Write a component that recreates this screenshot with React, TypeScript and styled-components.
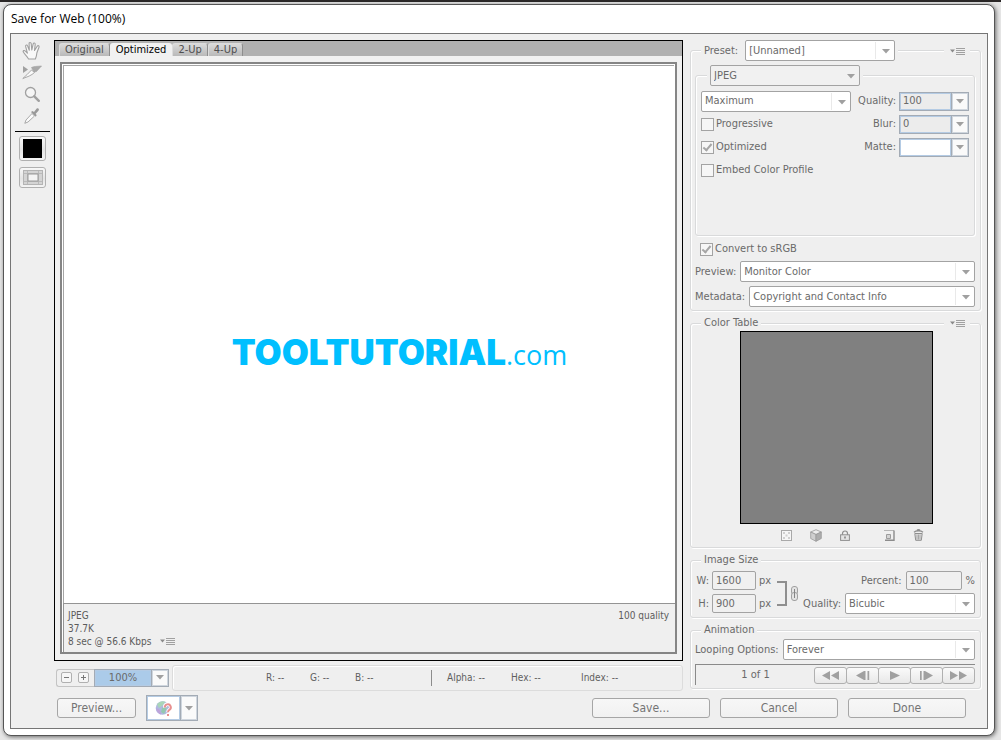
import React, { useState } from "react";
import styled, { createGlobalStyle } from "styled-components";

const UI_FONT = `"DejaVu Sans Condensed", "DejaVu Sans", sans-serif`;
const PANEL = "#efefef";
const TEXT = "#6a6a6a";
const EDGE = "#a3a3a3";
const MUTED = "#a0a0a0";
const BLUE_EDGE = "#a3abb5";
const BLUE_GLOW = "#b4cbe4";

const GlobalStyle = createGlobalStyle`
  *, *::before, *::after { box-sizing: border-box; }
  body { margin: 0; background: #e3e3e3; }
  button, input, select { font: inherit; color: inherit; margin: 0; }
`;

const Desktop = styled.div`
  display: flex;
  flex-direction: column;
  min-height: 100vh;
  padding: 2px 6px 4px 3px;
  border-top: 2px solid #2b2828;
  background: #e6e6e6;
  font: 11px/14px ${UI_FONT};
  color: ${TEXT};
`;

const Dialog = styled.main`
  flex: 1;
  display: flex;
  flex-direction: column;
  padding: 0 6px 6px;
  border: 1px solid #555;
  border-radius: 8px;
  background: #fff;
  box-shadow: 1px 1px 4px rgba(0, 0, 0, 0.55);
`;

const TitleBar = styled.h1`
  margin: 0;
  height: 28px;
  padding-left: 1px;
  font: 12px/28px "Open Sans", "Noto Sans", sans-serif;
  color: #000;
`;

const Body = styled.div`
  flex: 1;
  display: flex;
  flex-direction: column;
  border: 1px solid #757575;
  background: ${PANEL};
`;

const Columns = styled.div`
  flex: 1;
  display: grid;
  grid-template-columns: 43px minmax(0, 1fr) 291px;
  padding: 6px 6px 0 0;
`;

/* Tool strip */

const Tools = styled.nav`
  display: flex;
  flex-direction: column;
  align-items: center;
`;

const ToolButton = styled.button`
  display: grid;
  place-items: center;
  width: 24px;
  height: 22px;
  padding: 0 2px 2px 0;
  border: 0;
  background: none;
`;

const ToolRule = styled.hr`
  width: 35px;
  margin: 3px 0 4px;
  border: 0;
  border-top: 1px solid #000;
`;

const WellButton = styled.button<{ $tall?: boolean }>`
  display: grid;
  place-items: center;
  width: 27px;
  height: ${(p) => (p.$tall ? 25 : 21)}px;
  margin-bottom: 6px;
  padding: 0;
  border: 1px solid #b0b0b0;
  border-radius: 3px;
  background: linear-gradient(#f8f8f8, #e4e4e4 55%, #f4f4f4);
`;

const Swatch = styled.span`
  width: 19px;
  height: 19px;
  background: #000;
`;

/* Document view */

const Center = styled.section`
  display: flex;
  flex-direction: column;
  min-width: 0;
  margin-right: 7px;
`;

const View = styled.div`
  flex: 1;
  display: flex;
  flex-direction: column;
  border: 1px solid #000;
  background: #f1f1f1;
`;

const TabBar = styled.div`
  display: flex;
  align-items: flex-end;
  height: 15px;
  padding-left: 4px;
  background: #b1b1b1;
`;

const Tab = styled.button<{ $active?: boolean }>`
  height: 13px;
  padding: 0 5px;
  border: 1px solid ${(p) => (p.$active ? "#f1f1f1" : "#dcdcdc")};
  border-right-color: ${(p) => (p.$active ? "#f1f1f1" : "#8e8e8e")};
  border-bottom: 0;
  border-radius: 3px 3px 0 0;
  background: ${(p) => (p.$active ? "#f1f1f1" : "linear-gradient(#dadada, #b9b9b9)")};
  color: ${(p) => (p.$active ? "#000" : "#4f4f4f")};
  line-height: 12px;
`;

const Frame = styled.div`
  flex: 1;
  display: flex;
  flex-direction: column;
  margin: 6px 5px;
  border: 2px solid #858585;
  padding-left: 1px;
  background: #fff;
`;

const Canvas = styled.div`
  flex: 1;
  display: flex;
  align-items: center;
  justify-content: center;
  padding: 38px 0 0 61px;
  margin: 1px 1px 0 0;
  border-left: 1px solid #a5a5a5;
  border-top: 1px solid #a5a5a5;
`;

const Logo = styled.p`
  display: flex;
  align-items: baseline;
  margin: 0;
  color: #00bfff;
  font: 27px/36px "Open Sans", "Noto Sans", sans-serif;
`;

const LogoMark = styled.strong`
  font: 900 35px/36px Inter, sans-serif;
`;

const Info = styled.div`
  display: flex;
  justify-content: space-between;
  align-items: flex-start;
  height: 49px;
  padding: 5px 6px 0 4px;
  border: 1px solid #949494;
  border-width: 1px 0 0 1px;
  background: ${PANEL};
  font-size: 10px;
  line-height: 13px;
  color: #5c5c5c;
`;

const InfoLine = styled.div`
  display: flex;
  align-items: center;
  gap: 9px;
`;

const StatusRow = styled.div`
  display: flex;
  align-items: center;
  gap: 3px;
  margin: 3px 0 0 2px;
  height: 27px;
`;

const ZoomBox = styled.div`
  display: flex;
  align-items: center;
  justify-content: space-between;
  width: 113px;
  height: 18px;
  border: 1px solid #c4c4c4;
  border-right: 0;
  border-radius: 3px 0 0 3px;
`;

const StepButton = styled.button`
  display: grid;
  place-items: center;
  width: 11px;
  height: 11px;
  margin: 0 2px 0 4px;
  padding: 0;
  border: 1px solid #b0b0b0;
  border-radius: 2px;
  background: #f6f6f6;
`;

const StatusPanel = styled.div`
  flex: 1;
  display: grid;
  grid-template-columns: 44px 45px 76px 16px 64px 70px 1fr;
  align-items: center;
  height: 26px;
  padding-left: 93px;
  border: 1px solid #dcdcdc;
  border-radius: 3px;
  box-shadow: inset 1px 1px 0 #fff;
  font-size: 10px;
  white-space: nowrap;
  color: #5f5f5f;
`;

const Tick = styled.span`
  width: 1px;
  height: 16px;
  background: #8c8c8c;
`;

/* Settings column */

const Settings = styled.form`
  display: flex;
  flex-direction: column;
  gap: 5px;
`;

const Group = styled.fieldset`
  position: relative;
  display: flex;
  flex-direction: column;
  min-width: 0;
  margin: 0;
  padding: 0 5px 3px 4px;
  border: 1px solid #d9dadb;
  border-radius: 3px;
  box-shadow: 1px 1px 0 #fff, inset 1px 1px 0 #fff;
`;

const FormatGroup = styled(Group)`
  margin-top: 4px;
  padding: 0 5px;
`;

const Legend = styled.legend`
  margin-left: 6px;
  padding: 0 3px;
  background: ${PANEL};
`;

const MenuButton = styled.button<{ $tall?: boolean }>`
  position: absolute;
  top: ${(p) => (p.$tall ? -18 : -15)}px;
  right: 10px;
  display: grid;
  place-items: center;
  width: 26px;
  height: 16px;
  padding: 0;
  border: 0;
  background: ${PANEL};
`;

const InlineMenu = styled.button`
  display: grid;
  padding: 0;
  border: 0;
  background: none;
`;

const Row = styled.div<{ $top?: number; $h?: number; $indent?: number }>`
  display: flex;
  align-items: center;
  justify-content: space-between;
  gap: 4px;
  height: ${(p) => p.$h ?? 21}px;
  margin-top: ${(p) => p.$top ?? 0}px;
  padding-left: ${(p) => p.$indent ?? 0}px;
`;

const Label = styled.label<{ $w?: number }>`
  ${(p) => p.$w && `width: ${p.$w}px; text-align: right;`}
  white-space: nowrap;
`;

const SelectShell = styled.span<{ $w?: number; $plain?: boolean }>`
  position: relative;
  display: flex;
  ${(p) => (p.$w ? `width: ${p.$w}px;` : "flex: 1;")}
  height: 21px;
  border: 1px solid ${EDGE};
  border-radius: 2px;
  background: ${(p) => (p.$plain ? "#f1f1f1" : "#fff")};

  &::after {
    content: "";
    position: absolute;
    top: 1px;
    bottom: 1px;
    right: 18px;
    width: 1px;
    background: ${(p) => (p.$plain ? "transparent" : "#e9e9e9")};
  }
`;

const NativeSelect = styled.select`
  appearance: none;
  width: 100%;
  padding: 0 20px 0 3px;
  border: 0;
  background: none;
  outline: none;
`;

const SelectArrow = styled.svg`
  position: absolute;
  top: 8px;
  right: 4px;
  pointer-events: none;
`;

const Combo = styled.span<{ $w: number; $h?: number }>`
  display: flex;
  flex-shrink: 0;
  width: ${(p) => p.$w}px;
  height: ${(p) => p.$h ?? 19}px;
  border: 1px solid ${BLUE_EDGE};
`;

const ComboInput = styled.input<{ $fill?: string; $center?: boolean }>`
  flex: 1;
  min-width: 0;
  padding: 0 3px;
  border: 0;
  border-radius: 0;
  background: ${(p) => p.$fill ?? "#ececec"};
  box-shadow: inset 0 0 0 1px ${BLUE_GLOW};
  text-align: ${(p) => (p.$center ? "center" : "left")};
  outline: none;
`;

const ComboButton = styled.button`
  display: grid;
  place-items: center;
  width: 17px;
  padding: 0;
  border: 0;
  border-left: 1px solid ${BLUE_EDGE};
  background: #fafafa;
  box-shadow: inset 0 0 0 1px #cfd6de;
`;

const Fields = styled.div`
  display: flex;
  flex-direction: column;
  gap: 3px;
  min-height: 144px;
  margin-top: 5px;
`;

const CheckLabel = styled.label`
  display: flex;
  align-items: center;
  gap: 2px;
`;

const Check = styled.input`
  appearance: none;
  display: grid;
  place-items: center;
  width: 13px;
  height: 13px;
  border: 1px solid ${EDGE};
  background: #f6f6f6;

  &:checked::before {
    content: "";
    width: 5px;
    height: 9px;
    margin-bottom: 2px;
    border: solid #a6a6a6;
    border-width: 0 2px 2px 0;
    transform: rotate(40deg);
  }
`;

const Pair = styled.span<{ $gap?: number }>`
  display: flex;
  align-items: center;
  gap: ${(p) => p.$gap ?? 3}px;
`;

const ColorTable = styled.div`
  align-self: center;
  width: 193px;
  height: 193px;
  margin: 1px 0 0 2px;
  border: 1px solid #000;
  background: #808080;
`;

const IconRow = styled.div`
  display: flex;
  justify-content: flex-end;
  gap: 16px;
  height: 18px;
  margin: 2px 50px 0 0;
`;

const IconButton = styled.button<{ $spaced?: boolean }>`
  display: grid;
  place-items: center;
  width: 13px;
  padding: 0;
  margin-left: ${(p) => (p.$spaced ? 16 : 0)}px;
  border: 0;
  background: none;
`;

const NumberInput = styled.input<{ $w: number }>`
  width: ${(p) => p.$w}px;
  height: 19px;
  padding: 0 3px;
  border: 1px solid ${EDGE};
  border-radius: 2px;
  background: #f0f0f0;
  outline: none;
`;

const SizeGrid = styled.div`
  display: grid;
  grid-template-columns: auto auto 1fr;
  margin-top: 4px;
`;

const SizeColumn = styled.div`
  display: flex;
  flex-direction: column;
  gap: 3px;
  align-items: flex-end;
`;

const LinkIcon = styled.svg`
  margin: 10px 0 0 5px;
`;

const Player = styled.div`
  display: flex;
  align-items: center;
  height: 21px;
  margin-top: 4px;
  border: 1px solid #8a8a8a;
  border-width: 1px 0 0 1px;
`;

const FrameCount = styled.output`
  flex: 1;
  text-align: center;
`;

const PlayerButton = styled.button`
  display: grid;
  place-items: center;
  width: 33px;
  height: 17px;
  margin-left: -1px;
  padding: 0;
  border: 1px solid #b0b0b0;
  border-radius: 3px;
  background: linear-gradient(#fafafa, #e8e8e8);
`;

/* Footer */

const Footer = styled.footer`
  display: flex;
  align-items: center;
  gap: 10px;
  height: 37px;
  padding: 0 21px 3px 46px;
`;

const PushButton = styled.button<{ $w: number }>`
  width: ${(p) => p.$w}px;
  height: 20px;
  padding: 0;
  border: 1px solid #a6a6a6;
  border-radius: 3px;
  background: linear-gradient(#f7f7f7, #f1f1f1);
  font-size: 12px;
  line-height: 16px;
  color: #747474;
`;

const BrowserPick = styled.div`
  display: flex;
  width: 52px;
  height: 26px;
  margin-right: auto;
  border: 1px solid ${BLUE_EDGE};
`;

const BrowserButton = styled.button`
  flex: 1;
  display: grid;
  place-items: center;
  padding: 0;
  border: 0;
  background: #fff;
  box-shadow: inset 0 0 0 1px ${BLUE_GLOW};
`;

const Arrow = () => (
  <svg width="8" height="5" viewBox="0 0 8 5" aria-hidden="true">
    <path d="M0 0h8L4 4.600z" fill={MUTED} />
  </svg>
);

const MenuGlyph = () => (
  <svg width="15" height="9" viewBox="0 0 15 9" aria-hidden="true">
    <path d="M0 2.500h5L2.500 5.500z" fill="#8a8a8a" />
    <path d="M6 1.500h9M6 3.500h9M6 5.500h9M6 7.500h9" stroke="#a0a0a0" strokeWidth="1" />
  </svg>
);

const HandIcon = () => (
  <svg width="19" height="19" viewBox="0 0 19 19" fill="none" aria-hidden="true">
    <path
      d="M6.500 18C5 15 2.300 13 1.200 10.800.8 9.500 2.400 9 3.400 10.200L5.400 12.200 3.600 5.400C3.300 3.900 5.100 3.500 5.600 4.900L7.300 9.300 7.100 2.600C7.100 1.100 9 1.100 9.200 2.600L9.800 9 11.200 2.900C11.600 1.500 13.400 1.900 13.200 3.400L12.500 9.500 15.200 5.300C16 4.100 17.500 4.900 17 6.200L14.900 11.700C14.700 14 14.200 16 13.400 18z"
      fill="#f8f8f8"
      stroke={MUTED}
      strokeWidth="1.100"
      strokeLinejoin="round"
    />
  </svg>
);

const SliceIcon = () => (
  <svg width="20" height="16" viewBox="0 0 20 16" fill="none" aria-hidden="true">
    <path d="M1 2v7l5-3.500z" fill={MUTED} />
    <path d="M9.500 3.500C12 2.200 15 2.400 19.500 2L14.500 7.500 12 8z" fill="#a9a9a9" stroke={MUTED} strokeWidth=".6" />
    <path d="M9.500 6 12.500 8.500C9.500 11.500 5 13 .8 14.500 4 12 6.500 9 9.500 6z" stroke={MUTED} fill="#fafafa" strokeWidth=".9" />
  </svg>
);

const ZoomIcon = () => (
  <svg width="18" height="18" viewBox="0 0 18 18" fill="none" aria-hidden="true">
    <circle cx="7.500" cy="7.500" r="5" stroke={MUTED} strokeWidth="1.300" fill="#f5f5f5" />
    <path d="M11.300 11.300 15.800 15.800" stroke={MUTED} strokeWidth="2.400" strokeLinecap="round" />
  </svg>
);

const DropperIcon = () => (
  <svg width="18" height="18" viewBox="0 0 18 18" fill="none" aria-hidden="true">
    <path d="M9 6.500 11.500 9 5 15 1.800 16.300 3 13z" stroke={MUTED} fill="#fafafa" strokeWidth=".9" />
    <path d="M8 5l1.500-1 1.500 1 2.500-3.200c1.500-1.300 3.300.5 2 2L12.700 6.700l1 1.500-1 1.500z" fill="#999" />
  </svg>
);

const SliceVisibilityIcon = () => (
  <svg width="20" height="15" viewBox="0 0 20 15" fill="none" aria-hidden="true">
    <rect x=".5" y=".5" width="19" height="14" fill="#d4d4d4" stroke="#b4b4b4" />
    <path d="M1 3.500h18M4.500 1v13M15.500 1v13M1 11.500h18" stroke="#bababa" />
    <rect x="5" y="4" width="10" height="7" fill="#f4f4f4" stroke="#9a9a9a" />
  </svg>
);

const GlobeIcon = () => (
  <svg width="18" height="17" viewBox="0 0 18 17" fill="none" aria-hidden="true">
    <circle cx="7.500" cy="8" r="6.800" fill="#b0b8e0" />
    <path d="M2 4.500C4 1.500 8 .5 10.500 1.800L8 5 4 8z" fill="#a9d6b8" />
    <path d="M7 8l3-3 2 1-1 4-2 4-3-2z" fill="#94c9b0" />
    <path d="M1.200 8c0 3 2 6 5 6.500L5 10z" fill="#bda4da" />
    <path d="M9.800 7.500a3 3 0 1 1 4.600 2.300c-1.100.8-1.400 1.200-1.400 2.400M13 14v2" stroke="#fff" strokeWidth="3.600" />
    <path d="M9.800 7.500a3 3 0 1 1 4.600 2.300c-1.100.8-1.400 1.200-1.400 2.400M13 14v2" stroke="#e78f8f" strokeWidth="2" />
  </svg>
);

const TransparencyIcon = () => (
  <svg width="11" height="11" viewBox="0 0 11 11" aria-hidden="true">
    <rect x=".5" y=".5" width="10" height="10" fill="#f6f6f6" stroke="#a9a9a9" />
    <path d="M2 2h2v2H2zM7 2h2v2H7zM4.500 4.500h2v2h-2zM2 7h2v2H2zM7 7h2v2H7z" fill="#cfcfcf" />
  </svg>
);

const CubeIcon = () => (
  <svg width="12" height="13" viewBox="0 0 12 13" stroke="#999" strokeWidth=".8" aria-hidden="true">
    <path d="M6 .7 11.300 3 6 5.500.7 3z" fill="#eee" />
    <path d="M.7 3 6 5.500v6.800L.7 9.500z" fill="#cfcfcf" />
    <path d="M11.300 3 6 5.500v6.800l5.300-2.800z" fill="#adadad" />
  </svg>
);

const LockIcon = () => (
  <svg width="10" height="11" viewBox="0 0 10 11" fill="none" aria-hidden="true">
    <path d="M2.500 5V3.500a2.500 2.500 0 0 1 5 0V5" stroke="#8f8f8f" strokeWidth="1.200" />
    <rect x=".6" y="4.800" width="8.800" height="5.600" fill="#e4e4e4" stroke="#8f8f8f" />
    <path d="M5 6.500v2" stroke="#777" strokeWidth="1.400" />
  </svg>
);

const NewIcon = () => (
  <svg width="11" height="11" viewBox="0 0 11 11" fill="none" aria-hidden="true">
    <path d="M0 .5h10" stroke="#b5b5b5" />
    <path d="M10 .5v9.700H1" stroke="#8c8c8c" strokeWidth="1.400" />
    <path d="M2.500 4.500h4v4h-4z" fill="#d4d4d4" stroke="#9c9c9c" />
  </svg>
);

const TrashIcon = () => (
  <svg width="11" height="12" viewBox="0 0 11 12" fill="none" stroke="#8f8f8f" aria-hidden="true">
    <path d="M1 3.200C3 1.500 8 1.500 10 3.200M4 1.500c.5-1 2.500-1 3 0" strokeWidth="1.300" />
    <path d="M1.800 4.500 2.700 11.300h5.600l.9-6.800z" fill="#e2e2e2" />
    <path d="M4 5.500v5M5.500 5.500v5M7 5.500v5" strokeWidth=".7" />
  </svg>
);

const PLAYER_ICONS: { name: string; d: string }[] = [
  { name: "First frame", d: "M9 0v9L1 4.500zM18 0v9l-8-4.500z" },
  { name: "Previous frame", d: "M11 0v9L3 4.500zM11 0h1.500v9H11zM14.500 0h1.700v9h-1.700z" },
  { name: "Play", d: "M5 0v9l10-4.500z" },
  { name: "Next frame", d: "M3 0h1.700v9H3zM6.500 0H8v9H6.500zM8 0v9l8-4.500z" },
  { name: "Last frame", d: "M1 0v9l8-4.500zM10 0v9l8-4.500z" },
];

type SelectProps = { id: string; value: string; width?: number; plain?: boolean; label?: string };

const Select = ({ id, value, width, plain, label }: SelectProps) => (
  <SelectShell $w={width} $plain={plain}>
    <NativeSelect id={id} aria-label={label} defaultValue={value}>
      <option>{value}</option>
    </NativeSelect>
    <SelectArrow width="8" height="5" viewBox="0 0 8 5" aria-hidden="true">
      <path d="M0 0h8L4 4.600z" fill={MUTED} />
    </SelectArrow>
  </SelectShell>
);

const ComboField = ({ id, label, value, fill }: { id: string; label: string; value: string; fill?: string }) => (
  <Pair>
    <Label htmlFor={id}>{label}</Label>
    <Combo $w={70}>
      <ComboInput id={id} defaultValue={value} $fill={fill} />
      <ComboButton type="button" aria-label={`${label} options`}>
        <Arrow />
      </ComboButton>
    </Combo>
  </Pair>
);

const CheckField = ({ label, checked }: { label: string; checked?: boolean }) => (
  <CheckLabel>
    <Check type="checkbox" defaultChecked={checked} />
    {label}
  </CheckLabel>
);

const TABS = ["Original", "Optimized", "2-Up", "4-Up"];

export default function App() {
  const [tab, setTab] = useState("Optimized");

  return (
    <Desktop>
      <GlobalStyle />
      <Dialog>
        <TitleBar>Save for Web (100%)</TitleBar>
        <Body>
          <Columns>
            <Tools aria-label="Tools">
              <ToolButton aria-label="Hand"><HandIcon /></ToolButton>
              <ToolButton aria-label="Slice select"><SliceIcon /></ToolButton>
              <ToolButton aria-label="Zoom"><ZoomIcon /></ToolButton>
              <ToolButton aria-label="Eyedropper"><DropperIcon /></ToolButton>
              <ToolRule />
              <WellButton $tall aria-label="Eyedropper color"><Swatch /></WellButton>
              <WellButton aria-label="Toggle slices"><SliceVisibilityIcon /></WellButton>
            </Tools>

            <Center>
              <View>
                <TabBar role="tablist">
                  {TABS.map((name) => (
                    <Tab key={name} role="tab" aria-selected={tab === name} $active={tab === name} onClick={() => setTab(name)}>
                      {name}
                    </Tab>
                  ))}
                </TabBar>
                <Frame>
                  <Canvas>
                    <Logo>
                      <LogoMark>TOOLTUTORIAL</LogoMark>.com
                    </Logo>
                  </Canvas>
                  <Info>
                    <div>
                      <InfoLine>JPEG</InfoLine>
                      <InfoLine>37.7K</InfoLine>
                      <InfoLine>
                        8 sec @ 56.6 Kbps
                        <InlineMenu aria-label="Download speed"><MenuGlyph /></InlineMenu>
                      </InfoLine>
                    </div>
                    <span>100 quality</span>
                  </Info>
                </Frame>
              </View>
              <StatusRow>
                <ZoomBox>
                  <Pair $gap={0}>
                    <StepButton aria-label="Zoom out">
                      <svg width="7" height="7"><path d="M1 3.500h5" stroke="#777" /></svg>
                    </StepButton>
                    <StepButton aria-label="Zoom in">
                      <svg width="7" height="7"><path d="M1 3.500h5M3.500 1v5" stroke="#777" /></svg>
                    </StepButton>
                  </Pair>
                  <Combo $w={75} $h={18}>
                    <ComboInput aria-label="Zoom level" defaultValue="100%" $fill="#abcbe9" $center />
                    <ComboButton aria-label="Zoom levels"><Arrow /></ComboButton>
                  </Combo>
                </ZoomBox>
                <StatusPanel>
                  <span>R: --</span>
                  <span>G: --</span>
                  <span>B: --</span>
                  <Tick />
                  <span>Alpha: --</span>
                  <span>Hex: --</span>
                  <span>Index: --</span>
                </StatusPanel>
              </StatusRow>
            </Center>

            <Settings>
              <Group>
                <Legend>
                  <Pair $gap={7}>
                    <Label htmlFor="preset">Preset:</Label>
                    <Select id="preset" value="[Unnamed]" width={150} />
                  </Pair>
                </Legend>
                <MenuButton type="button" $tall aria-label="Preset menu"><MenuGlyph /></MenuButton>
                <FormatGroup>
                  <Legend>
                    <Select id="format" label="Format" value="JPEG" width={150} plain />
                  </Legend>
                  <Fields>
                    <Row $h={20}>
                      <Select id="level" label="Compression quality" value="Maximum" width={150} />
                      <ComboField id="quality" label="Quality:" value="100" />
                    </Row>
                    <Row $h={20}>
                      <CheckField label="Progressive" />
                      <ComboField id="blur" label="Blur:" value="0" />
                    </Row>
                    <Row $h={20}>
                      <CheckField label="Optimized" checked />
                      <ComboField id="matte" label="Matte:" value="" fill="#fff" />
                    </Row>
                    <Row $h={20}>
                      <CheckField label="Embed Color Profile" />
                    </Row>
                  </Fields>
                </FormatGroup>
                <Row $top={3} $h={20} $indent={5}>
                  <CheckField label="Convert to sRGB" checked />
                </Row>
                <Row $top={2}>
                  <Label htmlFor="preview">Preview:</Label>
                  <Select id="preview" value="Monitor Color" />
                </Row>
                <Row $top={4}>
                  <Label htmlFor="metadata">Metadata:</Label>
                  <Select id="metadata" value="Copyright and Contact Info" />
                </Row>
              </Group>

              <Group>
                <Legend>Color Table</Legend>
                <MenuButton type="button" aria-label="Color table menu"><MenuGlyph /></MenuButton>
                <ColorTable />
                <IconRow>
                  <IconButton type="button" aria-label="Map to transparent"><TransparencyIcon /></IconButton>
                  <IconButton type="button" aria-label="Web shift"><CubeIcon /></IconButton>
                  <IconButton type="button" aria-label="Lock color"><LockIcon /></IconButton>
                  <IconButton type="button" $spaced aria-label="Add color"><NewIcon /></IconButton>
                  <IconButton type="button" aria-label="Delete color"><TrashIcon /></IconButton>
                </IconRow>
              </Group>

              <Group>
                <Legend>Image Size</Legend>
                <SizeGrid>
                  <SizeColumn>
                    <Pair>
                      <Label htmlFor="w" $w={14}>W:</Label>
                      <NumberInput id="w" $w={44} defaultValue="1600" />
                      px
                    </Pair>
                    <Row>
                      <Pair>
                        <Label htmlFor="h" $w={14}>H:</Label>
                        <NumberInput id="h" $w={44} defaultValue="900" />
                        px
                      </Pair>
                    </Row>
                  </SizeColumn>
                  <LinkIcon width="24" height="26" viewBox="0 0 24 26" fill="none" aria-hidden="true">
                    <path d="M1 1h9v23H1" stroke="#8f8f8f" strokeWidth="2" />
                    <rect x="15.500" y="5.500" width="6" height="8" rx="2.500" stroke="#a0a0a0" fill="#e4e4e4" />
                    <rect x="15.500" y="11.500" width="6" height="8" rx="2.500" stroke="#a0a0a0" fill="#e4e4e4" />
                    <path d="M18.500 8v9" stroke="#858585" />
                  </LinkIcon>
                  <SizeColumn>
                    <Pair $gap={4}>
                      <Label htmlFor="percent">Percent:</Label>
                      <NumberInput id="percent" $w={56} defaultValue="100" />
                      %
                    </Pair>
                    <Row>
                      <Label htmlFor="resample">Quality:</Label>
                      <Select id="resample" value="Bicubic" width={130} />
                    </Row>
                  </SizeColumn>
                </SizeGrid>
              </Group>

              <Group>
                <Legend>Animation</Legend>
                <Row $top={2}>
                  <Label htmlFor="loop">Looping Options:</Label>
                  <Select id="loop" value="Forever" />
                </Row>
                <Player>
                  <FrameCount>1 of 1</FrameCount>
                  {PLAYER_ICONS.map((icon) => (
                    <PlayerButton key={icon.name} type="button" aria-label={icon.name}>
                      <svg width="19" height="9" viewBox="0 0 19 9"><path d={icon.d} fill="#a0a0a0" /></svg>
                    </PlayerButton>
                  ))}
                </Player>
              </Group>
            </Settings>
          </Columns>

          <Footer>
            <PushButton $w={79}>Preview...</PushButton>
            <BrowserPick>
              <BrowserButton aria-label="Preview in browser"><GlobeIcon /></BrowserButton>
              <ComboButton aria-label="Choose browser"><Arrow /></ComboButton>
            </BrowserPick>
            <PushButton $w={118}>Save...</PushButton>
            <PushButton $w={118}>Cancel</PushButton>
            <PushButton $w={118}>Done</PushButton>
          </Footer>
        </Body>
      </Dialog>
    </Desktop>
  );
}
